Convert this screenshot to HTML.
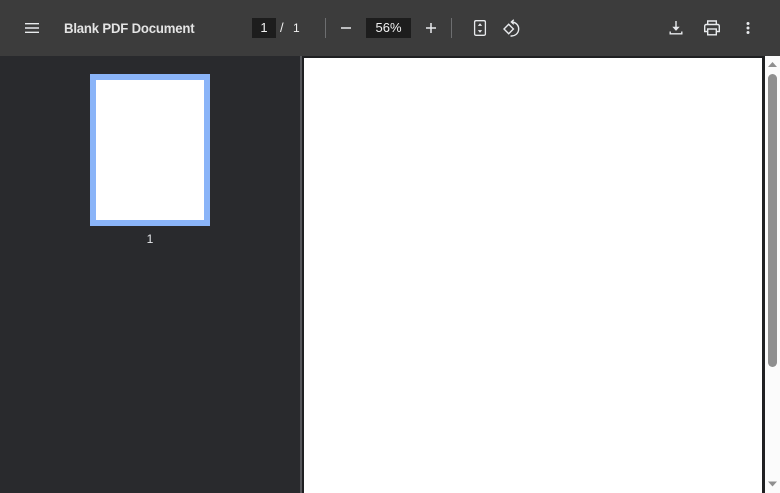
<!DOCTYPE html>
<html>
<head>
<meta charset="utf-8">
<style>
html,body{margin:0;padding:0;width:780px;height:493px;overflow:hidden;background:#1f2022;font-family:"Liberation Sans",sans-serif;}
div,svg,span{position:absolute;display:block;}
#bar{left:0;top:0;width:780px;height:56px;background:#3c3c3c;}
#side{left:0;top:56px;width:300px;height:437px;background:#292a2d;}
#div{left:300px;top:56px;width:2px;height:437px;background:#55565a;}
#viewer{left:302px;top:56px;width:463px;height:437px;background:#1f2022;}
#page{left:304px;top:58px;width:458px;height:435px;background:#fff;}
#track{left:765px;top:56px;width:15px;height:437px;background:#fbfbfb;}
#thumb{left:768px;top:74px;width:9px;height:293px;background:#8f8f8f;border-radius:5px;}
#tb{left:90px;top:74px;width:108px;height:140px;border:6px solid #8ab4f8;background:#fff;}
.t{color:#f1f1f1;white-space:nowrap;line-height:16px;}
#title{left:64px;top:20px;font-size:14px;font-weight:bold;color:#e4e4e4;letter-spacing:-.2px;transform-origin:0 50%;transform:scaleX(.94);}
.box{background:#1d1d1d;height:20px;top:18px;}
.sep{width:1px;height:20px;top:18px;background:#6d6e70;}
svg.i{fill:none;stroke:#e8eaed;}
</style>
</head>
<body>
<div id="bar"></div>
<svg class="i" style="left:24px;top:20px" width="16" height="16" viewBox="0 0 16 16" stroke-width="1.4"><path d="M1 3.700h14M1 8h14M1 12.300h14"/></svg>
<div id="title" class="t">Blank PDF Document</div>
<div class="box" style="left:252px;width:24px"></div>
<div class="t" style="left:252px;top:20px;width:24px;text-align:center;font-size:13px">1</div>
<div class="t" style="left:280px;top:20px;font-size:13px">/</div>
<div class="t" style="left:293px;top:20px;font-size:12px">1</div>
<div class="sep" style="left:325px"></div>
<svg class="i" style="left:340px;top:22px" width="12" height="12" viewBox="0 0 12 12" stroke-width="1.500"><path d="M1 6h10"/></svg>
<div class="box" style="left:366px;width:45px"></div>
<div class="t" style="left:366px;top:20px;width:45px;text-align:center;font-size:13px">56%</div>
<svg class="i" style="left:425px;top:22px" width="12" height="12" viewBox="0 0 12 12" stroke-width="1.500"><path d="M1 6h10M6 1v10"/></svg>
<div class="sep" style="left:451px"></div>
<svg class="i" style="left:472px;top:20px" width="16" height="16" viewBox="0 0 16 16" stroke-width="1.300"><rect x="2.600" y=".7" width="10.800" height="14.600" rx="1.400"/><path d="M8 3.200l2.200 2.700H5.800zM8 12.800l2.200-2.700H5.800z" fill="#e8eaed" stroke="none"/></svg>
<svg class="i" style="left:503px;top:19px" width="18" height="19" viewBox="0 0 18 19" stroke-width="1.400"><path d="M1 10L5.700 5.300 10.400 10 5.700 14.700z"/><path d="M8.500 3A7 7 0 1 1 7.500 16.900"/><path d="M10.800 .8L8.300 3l2.500 2.300" stroke-width="1.300"/></svg>
<svg class="i" style="left:668px;top:20px" width="16" height="16" viewBox="0 0 16 16" stroke-width="1.400"><path d="M8 1v7.500"/><path d="M4.300 6.700h7.400L8 10.900z" fill="#e8eaed" stroke="none"/><path d="M2.200 11.500v2.300h11.600v-2.300"/></svg>
<svg class="i" style="left:703px;top:20px" width="18" height="16" viewBox="0 0 18 16" stroke-width="1.400"><path d="M4.700 4.500V1h8.600v3.500M4.400 11.500H1.700V6c0-.9.700-1.500 1.500-1.500h11.600c.8 0 1.500.6 1.500 1.500v5.500h-2.700"/><rect x="4.700" y="9" width="8.600" height="5.800"/></svg>
<svg style="left:746px;top:22px" width="4" height="12" viewBox="0 0 4 12" fill="#e8eaed"><circle cx="2" cy="1.500" r="1.500"/><circle cx="2" cy="6" r="1.500"/><circle cx="2" cy="10.500" r="1.500"/></svg>

<div id="side"></div>
<div id="tb"></div>
<div class="t" style="left:90px;top:231px;width:120px;text-align:center;font-size:12px;color:#e8eaed">1</div>
<div id="div"></div>
<div id="viewer"></div>
<div id="page"></div>
<div id="track"></div>
<div id="thumb"></div>
<svg style="left:767px;top:62px" width="11" height="6" viewBox="0 0 11 6"><path d="M5.500 0L10 5H1z" fill="#8f8f8f"/></svg>
<svg style="left:767px;top:481px" width="11" height="6" viewBox="0 0 11 6"><path d="M1 .5h9L5.500 5.500z" fill="#8f8f8f"/></svg>
</body>
</html>
